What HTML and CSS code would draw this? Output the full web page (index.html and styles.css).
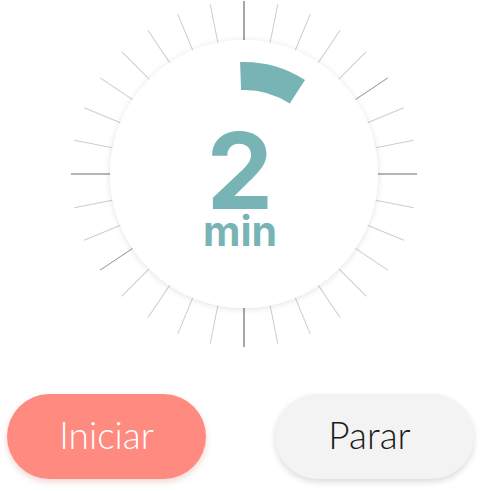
FILE: index.html
```html
<!DOCTYPE html>
<html lang="es">
<head>
<meta charset="utf-8">
<title>Temporizador</title>
<link rel="stylesheet" href="styles.css">
</head>
<body>
<main class="timer">
  <div class="dial">
    <svg class="dial-svg" width="486" height="350" viewBox="0 0 486 350" xmlns="http://www.w3.org/2000/svg">
      <defs>
        <filter id="soft" x="-20%" y="-20%" width="140%" height="140%">
          <feDropShadow dx="0" dy="1" stdDeviation="3" flood-color="#000" flood-opacity="0.12"/>
        </filter>
      </defs>
      <g class="ticks">
        <line class="tick major" x1="244" y1="50" x2="244" y2="1" transform="rotate(0 244 174)"/>
        <line class="tick" x1="244" y1="50" x2="244" y2="1" transform="rotate(11.25 244 174)"/>
        <line class="tick" x1="244" y1="50" x2="244" y2="1" transform="rotate(22.5 244 174)"/>
        <line class="tick" x1="244" y1="50" x2="244" y2="1" transform="rotate(33.75 244 174)"/>
        <line class="tick" x1="244" y1="50" x2="244" y2="1" transform="rotate(45 244 174)"/>
        <line class="tick mid" x1="244" y1="50" x2="244" y2="1" transform="rotate(56.25 244 174)"/>
        <line class="tick" x1="244" y1="50" x2="244" y2="1" transform="rotate(67.5 244 174)"/>
        <line class="tick" x1="244" y1="50" x2="244" y2="1" transform="rotate(78.75 244 174)"/>
        <line class="tick major" x1="244" y1="50" x2="244" y2="1" transform="rotate(90 244 174)"/>
        <line class="tick" x1="244" y1="50" x2="244" y2="1" transform="rotate(101.25 244 174)"/>
        <line class="tick" x1="244" y1="50" x2="244" y2="1" transform="rotate(112.5 244 174)"/>
        <line class="tick" x1="244" y1="50" x2="244" y2="1" transform="rotate(123.75 244 174)"/>
        <line class="tick" x1="244" y1="50" x2="244" y2="1" transform="rotate(135 244 174)"/>
        <line class="tick" x1="244" y1="50" x2="244" y2="1" transform="rotate(146.25 244 174)"/>
        <line class="tick" x1="244" y1="50" x2="244" y2="1" transform="rotate(157.5 244 174)"/>
        <line class="tick" x1="244" y1="50" x2="244" y2="1" transform="rotate(168.75 244 174)"/>
        <line class="tick major" x1="244" y1="50" x2="244" y2="1" transform="rotate(180 244 174)"/>
        <line class="tick" x1="244" y1="50" x2="244" y2="1" transform="rotate(191.25 244 174)"/>
        <line class="tick" x1="244" y1="50" x2="244" y2="1" transform="rotate(202.5 244 174)"/>
        <line class="tick" x1="244" y1="50" x2="244" y2="1" transform="rotate(213.75 244 174)"/>
        <line class="tick" x1="244" y1="50" x2="244" y2="1" transform="rotate(225 244 174)"/>
        <line class="tick mid" x1="244" y1="50" x2="244" y2="1" transform="rotate(236.25 244 174)"/>
        <line class="tick" x1="244" y1="50" x2="244" y2="1" transform="rotate(247.5 244 174)"/>
        <line class="tick" x1="244" y1="50" x2="244" y2="1" transform="rotate(258.75 244 174)"/>
        <line class="tick major" x1="244" y1="50" x2="244" y2="1" transform="rotate(270 244 174)"/>
        <line class="tick" x1="244" y1="50" x2="244" y2="1" transform="rotate(281.25 244 174)"/>
        <line class="tick" x1="244" y1="50" x2="244" y2="1" transform="rotate(292.5 244 174)"/>
        <line class="tick" x1="244" y1="50" x2="244" y2="1" transform="rotate(303.75 244 174)"/>
        <line class="tick" x1="244" y1="50" x2="244" y2="1" transform="rotate(315 244 174)"/>
        <line class="tick" x1="244" y1="50" x2="244" y2="1" transform="rotate(326.25 244 174)"/>
        <line class="tick" x1="244" y1="50" x2="244" y2="1" transform="rotate(337.5 244 174)"/>
        <line class="tick" x1="244" y1="50" x2="244" y2="1" transform="rotate(348.75 244 174)"/>
      </g>
      <circle class="face" cx="244" cy="174" r="134" filter="url(#soft)"/>
      <path class="progress" d="M 240.58 76.06 A 98 98 0 0 1 297.37 91.81"/>
      <text class="value" x="240" y="209">2</text>
      <text class="unit" x="240" y="246">min</text>
    </svg>
  </div>
  <div class="controls">
    <button class="btn btn-start" type="button">Iniciar</button>
    <button class="btn btn-stop" type="button">Parar</button>
  </div>
</main>
</body>
</html>
```
FILE: styles.css
```css
* {
  box-sizing: border-box;
}

html, body {
  margin: 0;
  padding: 0;
  background: #ffffff;
}

body {
  width: 486px;
  height: 491px;
  overflow: hidden;
  font-family: "Lato", "Inter", "Liberation Sans", sans-serif;
}

.timer {
  display: flex;
  flex-direction: column;
}

.dial {
  height: 350px;
}

.dial-svg {
  display: block;
}

.tick {
  stroke: #cdcdcd;
  stroke-width: 1;
}

.tick.mid {
  stroke: #9a9a9a;
}

.tick.major {
  stroke: #6b6b6b;
  stroke-width: 1.2;
}

.face {
  fill: #ffffff;
}

.progress {
  fill: none;
  stroke: #78b4b5;
  stroke-width: 28;
  stroke-linecap: butt;
}

.value {
  font-family: "Inter", "Liberation Sans", sans-serif;
  font-weight: 700;
  font-size: 106px;
  fill: #78b4b5;
  text-anchor: middle;
}

.unit {
  font-family: "Inter", "Liberation Sans", sans-serif;
  font-weight: 700;
  font-size: 41px;
  fill: #78b4b5;
  text-anchor: middle;
}

.controls {
  display: flex;
  justify-content: space-between;
  padding: 44px 12px 0 7px;
}

.btn {
  width: 199px;
  height: 85px;
  border: none;
  border-radius: 43px;
  font-family: "Lato", "Inter", "Liberation Sans", sans-serif;
  font-weight: 300;
  font-size: 37px;
  display: flex;
  align-items: center;
  justify-content: center;
  padding: 0 0 4px 0;
  cursor: pointer;
}

.btn-start {
  background: #ff8a80;
  color: #ffffff;
  box-shadow: 0 3px 6px rgba(200, 90, 80, 0.25);
}

.btn-stop {
  background: #f3f3f3;
  color: #1c1a1a;
  box-shadow: 0 3px 6px rgba(0, 0, 0, 0.14);
  padding-right: 10px;
}
```
